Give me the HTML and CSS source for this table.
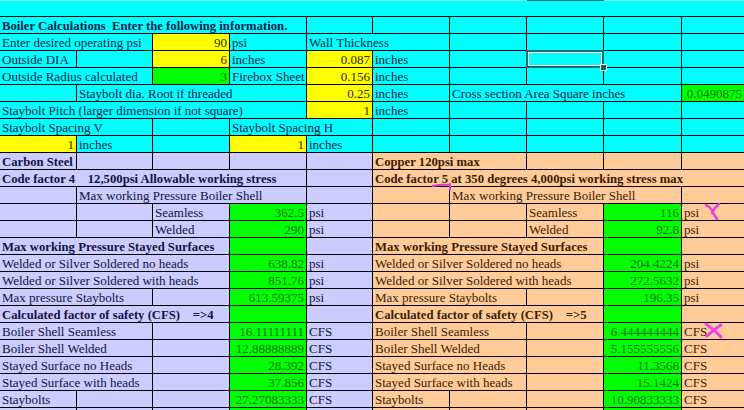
FILE: index.html
```html
<!DOCTYPE html>
<html>
<head>
<meta charset="utf-8">
<link rel="stylesheet" href="styles.css">
</head>
<body>
<div class="sheet">
  <!-- row 0 -->
  <div class="cell c top"></div><div class="cell c top"></div><div class="cell c top"></div><div class="cell c top"></div><div class="cell c top"></div><div class="cell c top"></div><div class="cell c top"></div><div class="cell c top seltop"></div><div class="cell c top"></div><div class="cell c top last"></div>
  <!-- row 1 -->
  <div class="cell c b s4">Boiler Calculations  Enter the following information.</div><div class="cell c"></div><div class="cell c"></div><div class="cell c"></div><div class="cell c"></div><div class="cell c"></div><div class="cell c last"></div>
  <!-- row 2 -->
  <div class="cell c s2">Enter desired operating psi</div><div class="cell y r">90</div><div class="cell c">psi</div><div class="cell c s2">Wall Thickness</div><div class="cell c"></div><div class="cell c"></div><div class="cell c"></div><div class="cell c last"></div>
  <!-- row 3 -->
  <div class="cell c">Outside DIA</div><div class="cell c"></div><div class="cell y r">6</div><div class="cell c">inches</div><div class="cell y r">0.087</div><div class="cell c">inches</div><div class="cell c"></div><div class="cell c sel"><span class="selbox"></span><span class="handle"></span></div><div class="cell c"></div><div class="cell c last"></div>
  <!-- row 4 -->
  <div class="cell c s2">Outside Radius calculated</div><div class="cell g r">3</div><div class="cell c">Firebox Sheet</div><div class="cell y r">0.156</div><div class="cell c">inches</div><div class="cell c"></div><div class="cell c"></div><div class="cell c"></div><div class="cell c last"></div>
  <!-- row 5 -->
  <div class="cell c"></div><div class="cell c s3">Staybolt dia. Root if threaded</div><div class="cell y r">0.25</div><div class="cell c">inches</div><div class="cell c s3">Cross section Area Square inches</div><div class="cell g r last">0.0490875</div>
  <!-- row 6 -->
  <div class="cell c s4">Staybolt Pitch (larger dimension if not square)</div><div class="cell y r">1</div><div class="cell c">inches</div><div class="cell c"></div><div class="cell c"></div><div class="cell c"></div><div class="cell c last"></div>
  <!-- row 7 -->
  <div class="cell c s2">Staybolt Spacing V</div><div class="cell c"></div><div class="cell c s2">Staybolt Spacing H</div><div class="cell c"></div><div class="cell c"></div><div class="cell c"></div><div class="cell c"></div><div class="cell c last"></div>
  <!-- row 8 -->
  <div class="cell y r">1</div><div class="cell c">inches</div><div class="cell c"></div><div class="cell y r">1</div><div class="cell c">inches</div><div class="cell c"></div><div class="cell c"></div><div class="cell c"></div><div class="cell c"></div><div class="cell c last"></div>
  <!-- row 9 -->
  <div class="cell l b">Carbon Steel</div><div class="cell l"></div><div class="cell l"></div><div class="cell l"></div><div class="cell l"></div><div class="cell p b s2">Copper 120psi max</div><div class="cell p"></div><div class="cell p"></div><div class="cell p last"></div>
  <!-- row 10 -->
  <div class="cell l b s4">Code factor 4    12,500psi Allowable working stress</div><div class="cell l"></div><div class="cell p b s5 last">Code factor 5 at 350 degrees 4,000psi working stress max</div>
  <!-- row 11 -->
  <div class="cell l"></div><div class="cell l s3">Max working Pressure Boiler Shell</div><div class="cell l"></div><div class="cell p"></div><div class="cell p s3">Max working Pressure Boiler Shell</div><div class="cell p last"></div>
  <!-- row 12 -->
  <div class="cell l"></div><div class="cell l"></div><div class="cell l">Seamless</div><div class="cell g r">362.5</div><div class="cell l">psi</div><div class="cell p"></div><div class="cell p"></div><div class="cell p">Seamless</div><div class="cell g r">116</div><div class="cell p last">psi</div>
  <!-- row 13 -->
  <div class="cell l"></div><div class="cell l"></div><div class="cell l">Welded</div><div class="cell g r">290</div><div class="cell l">psi</div><div class="cell p"></div><div class="cell p"></div><div class="cell p">Welded</div><div class="cell g r">92.8</div><div class="cell p last">psi</div>
  <!-- row 14 -->
  <div class="cell l b s3">Max working Pressure Stayed Surfaces</div><div class="cell g"></div><div class="cell l"></div><div class="cell p b s3">Max working Pressure Stayed Surfaces</div><div class="cell g"></div><div class="cell p last"></div>
  <!-- row 15 -->
  <div class="cell l s3">Welded or Silver Soldered no heads</div><div class="cell g r">638.82</div><div class="cell l">psi</div><div class="cell p s3">Welded or Silver Soldered no heads</div><div class="cell g r">204.4224</div><div class="cell p last">psi</div>
  <!-- row 16 -->
  <div class="cell l s3">Welded or Silver Soldered with heads</div><div class="cell g r">851.76</div><div class="cell l">psi</div><div class="cell p s3">Welded or Silver Soldered with heads</div><div class="cell g r">272.5632</div><div class="cell p last">psi</div>
  <!-- row 17 -->
  <div class="cell l s2">Max pressure Staybolts</div><div class="cell l"></div><div class="cell g r">613.59375</div><div class="cell l">psi</div><div class="cell p s2">Max pressure Staybolts</div><div class="cell p"></div><div class="cell g r">196.35</div><div class="cell p last">psi</div>
  <!-- row 18 -->
  <div class="cell l b s3">Calculated factor of safety (CFS)    =&gt;4</div><div class="cell g"></div><div class="cell l"></div><div class="cell p b s3">Calculated factor of safety (CFS)    =&gt;5</div><div class="cell g"></div><div class="cell p last"></div>
  <!-- row 19 -->
  <div class="cell l s2">Boiler Shell Seamless</div><div class="cell l"></div><div class="cell g r">16.11111111</div><div class="cell l">CFS</div><div class="cell p s2">Boiler Shell Seamless</div><div class="cell p"></div><div class="cell g r">6.444444444</div><div class="cell p last">CFS</div>
  <!-- row 20 -->
  <div class="cell l s2">Boiler Shell Welded</div><div class="cell l"></div><div class="cell g r">12.88888889</div><div class="cell l">CFS</div><div class="cell p s2">Boiler Shell Welded</div><div class="cell p"></div><div class="cell g r">5.155555556</div><div class="cell p last">CFS</div>
  <!-- row 21 -->
  <div class="cell l s2">Stayed Surface no Heads</div><div class="cell l"></div><div class="cell g r">28.392</div><div class="cell l">CFS</div><div class="cell p s2">Stayed Surface no Heads</div><div class="cell p"></div><div class="cell g r">11.3568</div><div class="cell p last">CFS</div>
  <!-- row 22 -->
  <div class="cell l s2">Stayed Surface with heads</div><div class="cell l"></div><div class="cell g r">37.856</div><div class="cell l">CFS</div><div class="cell p s2">Stayed Surface with heads</div><div class="cell p"></div><div class="cell g r">15.1424</div><div class="cell p last">CFS</div>
  <!-- row 23 -->
  <div class="cell l">Staybolts</div><div class="cell l"></div><div class="cell l"></div><div class="cell g r">27.27083333</div><div class="cell l">CFS</div><div class="cell p">Staybolts</div><div class="cell p"></div><div class="cell p"></div><div class="cell g r">10.90833333</div><div class="cell p last">CFS</div>
  <!-- row 24 (partial) -->
  <div class="cell l"></div><div class="cell l"></div><div class="cell l"></div><div class="cell g"></div><div class="cell l"></div><div class="cell p"></div><div class="cell p"></div><div class="cell p"></div><div class="cell g"></div><div class="cell p last"></div>

  <svg class="marks" width="744" height="410" viewBox="0 0 744 410">
    <path d="M433 186 Q441 184 450 185 M450 184 L450 190" fill="none" stroke="#e63ad6" stroke-width="2" stroke-linecap="round"/>
    <path d="M706 205 Q712 208 713 213 Q715 216 717 219 M719 204 Q714 208 712 213" fill="none" stroke="#e040e8" stroke-width="2.5" stroke-linecap="round"/>
    <path d="M706 324 Q714 329 721 337 M721 325 Q713 330 707 336" fill="none" stroke="#f040f0" stroke-width="3" stroke-linecap="round"/>
  </svg>
</div>
</body>
</html>
```
FILE: styles.css
```css
html, body {
  margin: 0;
  padding: 0;
  background: #00ffff;
}
body {
  width: 744px;
  height: 410px;
  overflow: hidden;
}
.sheet {
  position: relative;
  display: grid;
  grid-template-columns: 77px 76px 77px 77px 66px 77px 77px 77px 78px 62px;
  grid-auto-rows: 17px;
  font-family: "Liberation Serif", "Times New Roman", serif;
  font-size: 13px;
}
.cell {
  box-sizing: border-box;
  border-right: 1px solid #000;
  border-bottom: 1px solid #000;
  padding: 2px 2px 0 2px;
  line-height: 14px;
  white-space: pre;
  overflow: visible;
}
.cell.last { border-right: none; }
.top {
  border-right: none;
  border-top: 1px solid #8ff;
}
.seltop { border-top-color: #1c6b6b; }
.s2 { grid-column: span 2; }
.s3 { grid-column: span 3; }
.s4 { grid-column: span 4; }
.s5 { grid-column: span 5; }
.b { font-weight: bold; font-size: 12.7px; }
.r { text-align: right; }
.c { background: #00ffff; color: #06204a; }
.l { background: #ccccff; color: #141440; }
.p { background: #ffcc99; color: #3c1c04; }
.g { background: #00ff00; color: #0a740a; }
.y { background: #ffff00; color: #2c2c08; }
.sel { position: relative; }
.selbox {
  position: absolute;
  left: -1px;
  top: -1px;
  width: 78px;
  height: 18px;
  box-sizing: border-box;
  border: 2px solid #1e6e6e;
  box-shadow: inset 0 0 0 1px #ffffff;
}
.handle {
  position: absolute;
  right: -3px;
  bottom: -3px;
  width: 5px;
  height: 5px;
  background: #2a5a5a;
  box-shadow: 0 0 0 1px #e0ffff;
}
.marks {
  position: absolute;
  left: 0;
  top: 0;
  pointer-events: none;
}
```
